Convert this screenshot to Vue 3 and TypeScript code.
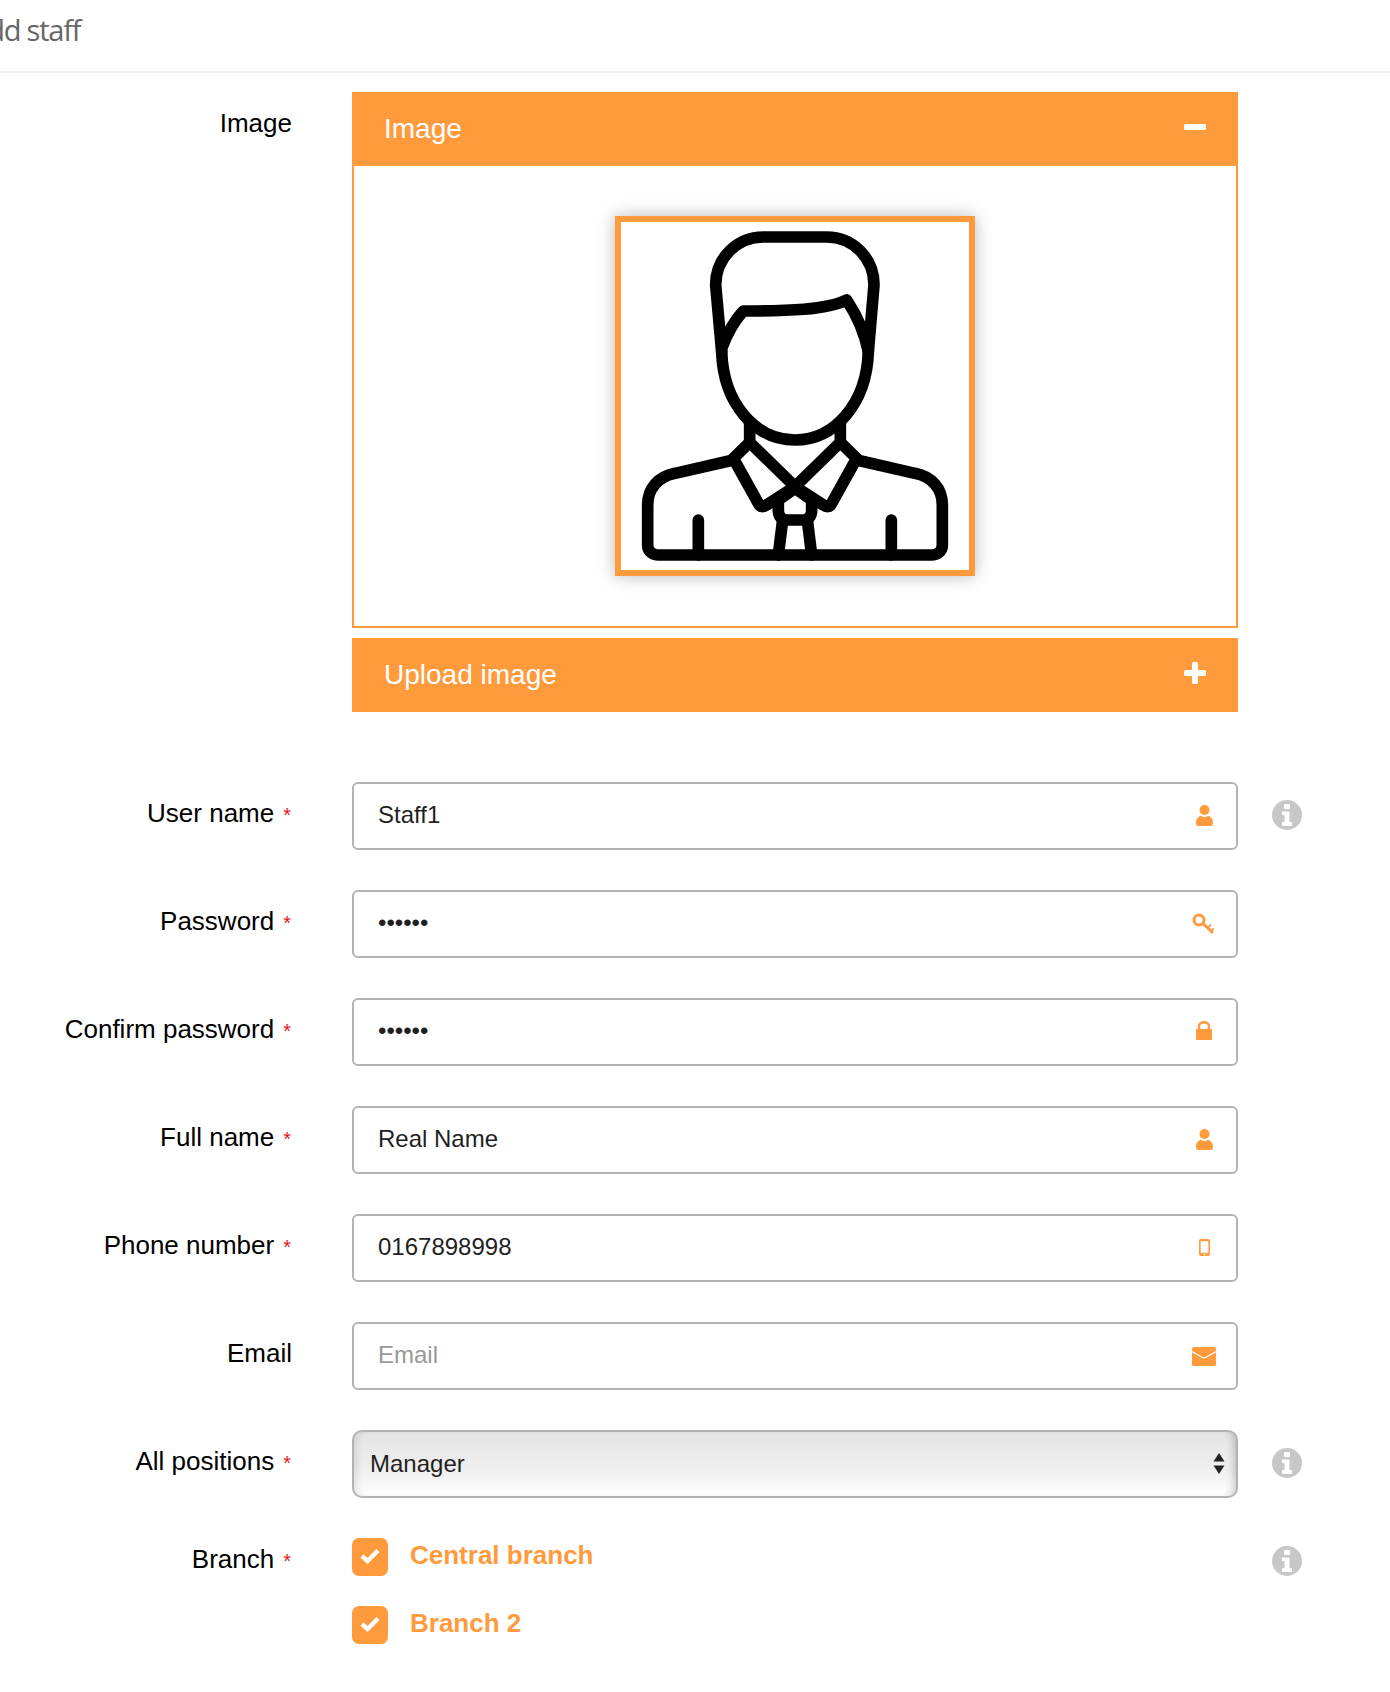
<script setup lang="ts">
import { ref } from 'vue'

interface Field {
  label: string
  type: string
  value: string
  placeholder?: string
  required: boolean
  icon: 'user' | 'key' | 'lock' | 'phone' | 'mail'
  info?: boolean
}

const fields = ref<Field[]>([
  { label: 'User name', type: 'text', value: 'Staff1', required: true, icon: 'user', info: true },
  { label: 'Password', type: 'password', value: '123456', required: true, icon: 'key' },
  { label: 'Confirm password', type: 'password', value: '123456', required: true, icon: 'lock' },
  { label: 'Full name', type: 'text', value: 'Real Name', required: true, icon: 'user' },
  { label: 'Phone number', type: 'text', value: '0167898998', required: true, icon: 'phone' },
  { label: 'Email', type: 'text', value: '', placeholder: 'Email', required: false, icon: 'mail' }
])

const position = ref('Manager')
const branches = ref(['Central branch', 'Branch 2'])
</script>

<template>
  <div class="page">
    <header class="top">
      <h1 class="title">Add staff</h1>
    </header>

    <form class="form" @submit.prevent>
      <div class="row image-row">
        <label class="label">Image</label>
        <div class="control">
          <div class="panel">
            <div class="panel-head">
              <span>Image</span>
              <svg class="toggle" width="22" height="22" viewBox="0 0 22 22">
                <rect x="0" y="8" width="22" height="6" rx="1.5" fill="#fff" />
              </svg>
            </div>
            <div class="panel-body">
              <div class="photo">
                <svg class="person" viewBox="63 51 1044 1044" fill="none" stroke="#000" stroke-width="35" stroke-linecap="round" stroke-linejoin="round">
                  <path d="M365 440 L347 240 C347 160 410 96 490 96 L680 96 C760 96 822 160 822 240 L805 440" />
                  <path d="M365 440 C370 600 470 705 585 705 C700 705 800 600 805 440" />
                  <path d="M365 430 C380 390 400 350 430 318 C560 318 680 315 740 285 C770 330 795 390 805 440" />
                  <path d="M449 650 L449 712 L400 760 L475 895 C480 907 490 907 500 900 L585 845 L449 712" />
                  <path d="M721 650 L721 712 L770 760 L695 895 C690 907 680 907 670 900 L585 845 L721 712" />
                  <path d="M400 765 L225 805 C175 815 143 850 143 900 L143 1020 C143 1040 160 1050 175 1050 L995 1050 C1010 1050 1027 1040 1027 1020 L1027 900 C1027 850 995 815 945 805 L770 765" />
                  <path d="M585 850 L535 885 L535 915 C535 935 545 945 560 945 L610 945 C625 945 635 935 635 915 L635 885 Z" />
                  <path d="M548 945 L535 1050 M622 945 L635 1050 M295 945 L295 1050 M874 945 L874 1050" />
                </svg>
              </div>
            </div>
          </div>
          <div class="panel-head upload">
            <span>Upload image</span>
            <svg class="toggle" width="22" height="22" viewBox="0 0 22 22">
              <rect x="0" y="8" width="22" height="6" rx="1.5" fill="#fff" />
              <rect x="8" y="0" width="6" height="22" rx="1.5" fill="#fff" />
            </svg>
          </div>
        </div>
      </div>

      <div v-for="f in fields" :key="f.label" class="row">
        <label class="label">{{ f.label }}<span v-if="f.required" class="req">*</span></label>
        <div class="control">
          <div class="field">
            <input class="input" :type="f.type" :value="f.value" :placeholder="f.placeholder" />
            <span class="field-icon" :class="f.icon">
              <svg v-if="f.icon === 'user'" width="17" height="21" viewBox="0 0 17 21" fill="#ff9a3d">
                <circle cx="8.5" cy="5" r="5" />
                <path d="M0 18C0 13.5 2.5 11.5 5 10.8C6 11.7 7.2 12.2 8.5 12.2C9.8 12.2 11 11.7 12 10.8C14.5 11.5 17 13.5 17 18C17 20 16 21 14.5 21H2.5C1 21 0 20 0 18Z" />
              </svg>
              <svg v-else-if="f.icon === 'key'" width="23" height="21" viewBox="0 0 23 21" fill="none" stroke="#ff9a3d">
                <circle cx="7" cy="7" r="5" stroke-width="3" />
                <path d="M10.8 10.5L21 20" stroke-width="2.8" />
                <path d="M15.5 15L19 11.8M19 18L21.8 15.6" stroke-width="2" />
              </svg>
              <svg v-else-if="f.icon === 'lock'" width="16" height="19" viewBox="0 0 16 19" fill="#ff9a3d">
                <rect x="0" y="8" width="16" height="11" rx="1" />
                <path d="M3 9V5.5C3 2.8 5 1.2 8 1.2C11 1.2 13 2.8 13 5.5V9" fill="none" stroke="#ff9a3d" stroke-width="2.4" />
              </svg>
              <svg v-else-if="f.icon === 'phone'" width="11" height="17" viewBox="0 0 11 17">
                <rect x="0" y="0" width="11" height="17" rx="2" fill="#ff9a3d" />
                <rect x="1.6" y="2.2" width="7.8" height="11.6" fill="#fff" />
                <circle cx="5.5" cy="15.4" r="0.9" fill="#fff" />
              </svg>
              <svg v-else width="24" height="19" viewBox="0 0 24 19">
                <rect x="0" y="0" width="24" height="19" rx="1.5" fill="#ff9a3d" />
                <path d="M0 4.5L10 10.2C11.3 11 12.7 11 14 10.2L24 4.5" fill="none" stroke="#fff" stroke-width="1.2" />
              </svg>
            </span>
          </div>
        </div>
        <svg v-if="f.info" class="info" width="30" height="30" viewBox="0 0 30 30">
          <circle cx="15" cy="15" r="15" fill="#c7c7c7" />
          <rect x="12" y="4" width="6" height="5" rx="1" fill="#fff" />
          <path d="M10 11.5H17.5V22H20V26H10V22H12.5V15H10Z" fill="#fff" />
        </svg>
      </div>

      <div class="row">
        <label class="label">All positions<span class="req">*</span></label>
        <div class="control">
          <div class="select-wrap">
            <select v-model="position" class="select">
              <option>Manager</option>
              <option>Staff</option>
            </select>
            <svg class="arrows" width="12" height="22" viewBox="0 0 12 22" fill="#222">
              <path d="M6 0L11.5 8.5H.5Z" />
              <path d="M.5 12.5H11.5L6 21Z" />
            </svg>
          </div>
        </div>
        <svg class="info" width="30" height="30" viewBox="0 0 30 30">
          <circle cx="15" cy="15" r="15" fill="#c7c7c7" />
          <rect x="12" y="4" width="6" height="5" rx="1" fill="#fff" />
          <path d="M10 11.5H17.5V22H20V26H10V22H12.5V15H10Z" fill="#fff" />
        </svg>
      </div>

      <div class="row branch-row">
        <label class="label">Branch<span class="req">*</span></label>
        <div class="control branches">
          <label v-for="b in branches" :key="b" class="branch">
            <span class="box">
              <svg width="20" height="16" viewBox="0 0 20 16" fill="none" stroke="#fff" stroke-width="4.4" stroke-linejoin="miter">
                <path d="M2 8L7.5 13L18 2.5" />
              </svg>
            </span>
            <span class="branch-name">{{ b }}</span>
          </label>
        </div>
        <svg class="info" width="30" height="30" viewBox="0 0 30 30">
          <circle cx="15" cy="15" r="15" fill="#c7c7c7" />
          <rect x="12" y="4" width="6" height="5" rx="1" fill="#fff" />
          <path d="M10 11.5H17.5V22H20V26H10V22H12.5V15H10Z" fill="#fff" />
        </svg>
      </div>
    </form>
  </div>
</template>

<style scoped>
.page {
  width: 1390px;
  min-height: 1692px;
  background: #fff;
  overflow: hidden;
  font-family: "Liberation Sans", Arial, sans-serif;
}

.top {
  height: 71px;
  border-bottom: 2px solid #f2f2f2;
}

.title {
  margin: 0 0 0 -30px;
  padding-top: 10px;
  font-family: "Open Sans", sans-serif;
  font-size: 29px;
  letter-spacing: -1.2px;
  line-height: 40px;
  font-weight: 400;
  color: #666;
}

.form {
  padding-top: 19px;
  display: flex;
  flex-direction: column;
  gap: 40px;
}

.row {
  display: grid;
  grid-template-columns: 292px 946px 64px;
}

.control {
  grid-column: 2;
  margin-left: 60px;
  width: 886px;
}

.image-row {
  margin-bottom: 30px;
}

.label {
  grid-column: 1;
  text-align: right;
  font-size: 26px;
  line-height: 30px;
  color: #000;
  padding-top: 16px;
}

.req {
  color: #e61717;
  font-size: 20px;
  margin: 0 1px 0 9px;
}

.panel {
  border: 2px solid #ff9a3d;
  border-top: none;
}

.panel-head {
  height: 74px;
  background: #ff9a3d;
  color: #fff;
  font-size: 28px;
  display: flex;
  align-items: center;
  justify-content: space-between;
  padding: 0 32px;
}

.panel > .panel-head {
  margin: 0 -2px;
}

.upload {
  margin-top: 10px;
}

.toggle {
  margin-bottom: 4px;
}

.panel-body {
  height: 460px;
  padding-top: 50px;
  box-sizing: border-box;
  display: flex;
  justify-content: center;
  align-items: flex-start;
}

.photo {
  width: 360px;
  height: 360px;
  box-sizing: border-box;
  border: 6px solid #ff9a3d;
  box-shadow: 0 0 16px rgba(0, 0, 0, 0.28);
  background: #fff;
}

.person {
  display: block;
  width: 348px;
  height: 348px;
  filter: blur(0.4px);
}

.field {
  height: 68px;
  box-sizing: border-box;
  border: 2px solid #b3b3b3;
  border-radius: 6px;
  display: flex;
  align-items: center;
  padding: 0 20px 0 24px;
  background: #fff;
}

.input {
  flex: 1;
  min-width: 0;
  border: none;
  outline: none;
  padding: 0 0 2px;
  background: transparent;
  font-family: "Liberation Sans", Arial, sans-serif;
  font-size: 24px;
  color: #1f1f1f;
}

.input::placeholder {
  color: #999;
}

.field-icon {
  width: 24px;
  display: flex;
  justify-content: center;
  align-items: center;
  margin-top: -2px;
}

.field-icon.key {
  margin-right: 1px;
  margin-left: -1px;
}

.field-icon.lock {
  margin-top: -4px;
}

.field-icon.mail {
  margin-top: 0;
}

.field-icon svg {
  display: block;
}

.info {
  grid-column: 3;
  justify-self: start;
  margin: 18px 0 0 34px;
}

.select-wrap {
  position: relative;
}

.select {
  display: block;
  width: 100%;
  height: 68px;
  box-sizing: border-box;
  border: 2px solid #b3b3b3;
  border-radius: 10px;
  appearance: none;
  -webkit-appearance: none;
  outline: none;
  padding: 0 40px 2px 16px;
  font-family: "Liberation Sans", Arial, sans-serif;
  font-size: 24px;
  color: #1f1f1f;
  background: linear-gradient(#e5e5e5, #eeeeee 55%, #fff);
  box-shadow: inset 8px 0 8px -6px rgba(0, 0, 0, 0.12), inset -8px 0 8px -6px rgba(0, 0, 0, 0.22);
}

.arrows {
  position: absolute;
  right: 13px;
  top: 23px;
}

.branch-row .label {
  padding-top: 6px;
}

.branch-row .info {
  margin-top: 8px;
}

.branches {
  display: flex;
  flex-direction: column;
  gap: 30px;
}

.branch {
  display: flex;
  align-items: center;
  gap: 22px;
  height: 38px;
}

.box {
  width: 36px;
  height: 38px;
  border-radius: 7px;
  background: #ff9a3d;
  display: flex;
  align-items: center;
  justify-content: center;
}

.box svg {
  margin-top: -2px;
}

.branch-name {
  font-size: 26px;
  font-weight: 700;
  color: #ff9a3d;
  margin-top: -4px;
}
</style>

<style>
html, body {
  margin: 0;
  background: #fff;
}
</style>
